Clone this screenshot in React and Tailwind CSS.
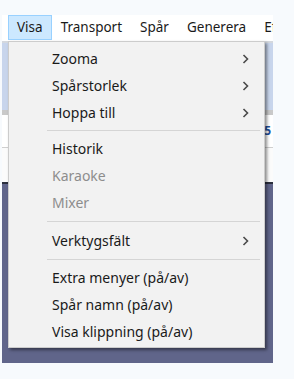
const font = { fontFamily: '"Noto Sans", "Open Sans", sans-serif' };

function MenuBar() {
  const items = ["Visa", "Transport", "Spår", "Generera", "Effekter"];
  return (
    <div className="h-[26px] bg-white flex pl-[6px] overflow-hidden whitespace-nowrap text-[13.5px] text-[#1a1a1a]">
      {items.map((name, i) => (
        <div
          key={name}
          className={
            i === 0
              ? "px-[8px] h-[25px] flex items-center bg-[#cce8ff] border border-[#99d1ff]"
              : "px-[9px] h-[25px] flex items-center"
          }
        >
          {name}
        </div>
      ))}
    </div>
  );
}

function Chevron() {
  return (
    <svg width="7" height="10" viewBox="0 0 7 10" className="mr-[1px]">
      <polyline points="1.5,1 5.5,5 1.5,9" fill="none" stroke="#4a4a4a" strokeWidth="1.6" />
    </svg>
  );
}

function Item({ label, sub, disabled }) {
  return (
    <div className="h-[27px] flex items-center pl-[43px] pr-[14px]">
      <span className={disabled ? "flex-1 text-[#8d8d8d]" : "flex-1 text-[#1a1a1a]"}>{label}</span>
      {sub && <Chevron />}
    </div>
  );
}

function Sep({ h }) {
  return (
    <div className={"flex items-center pl-[38px] pr-[4px] " + h}>
      <div className="h-px w-full bg-[#d5d5d5]" />
    </div>
  );
}

function ViewMenu() {
  return (
    <div className="absolute left-[6px] top-[26px] w-[257px] bg-[#f2f2f2] border border-[#cccccc] pt-[3px] pb-[2px] text-[14px] shadow-[2px_2px_3px_rgba(0,0,0,0.45)]">
      <Item label="Zooma" sub />
      <Item label="Spårstorlek" sub />
      <Item label="Hoppa till" sub />
      <Sep h="h-[9px]" />
      <Item label="Historik" />
      <Item label="Karaoke" disabled />
      <Item label="Mixer" disabled />
      <Sep h="h-[11px]" />
      <Item label="Verktygsfält" sub />
      <Sep h="h-[10px]" />
      <Item label="Extra menyer (på/av)" />
      <Item label="Spår namn (på/av)" />
      <Item label="Visa klippning (på/av)" />
    </div>
  );
}

export default function App() {
  return (
    <div className="min-h-screen bg-[#f7fafd] pt-[15px] pl-[2px]" style={font}>
      <div className="relative w-[271px] flex flex-col">
        <MenuBar />
        <div className="h-[2px] bg-[#d4d8de]" />
        <div className="h-[67px] bg-[#c8d5ec]" />
        <div className="h-[5px] bg-[#c9c9c9]" />
        <div className="h-[33px] bg-white border-b border-[#cfcfcf] flex justify-end items-center pr-[2px]">
          <span className="text-[12px] text-[#1f4f99] font-bold">5</span>
        </div>
        <div className="h-[34px] bg-[#fbfbfb]" />
        <div className="h-[2px] bg-[#2b2f3d]" />
        <div className="h-[179px] bg-[#60658a]" />
        <ViewMenu />
      </div>
    </div>
  );
}
